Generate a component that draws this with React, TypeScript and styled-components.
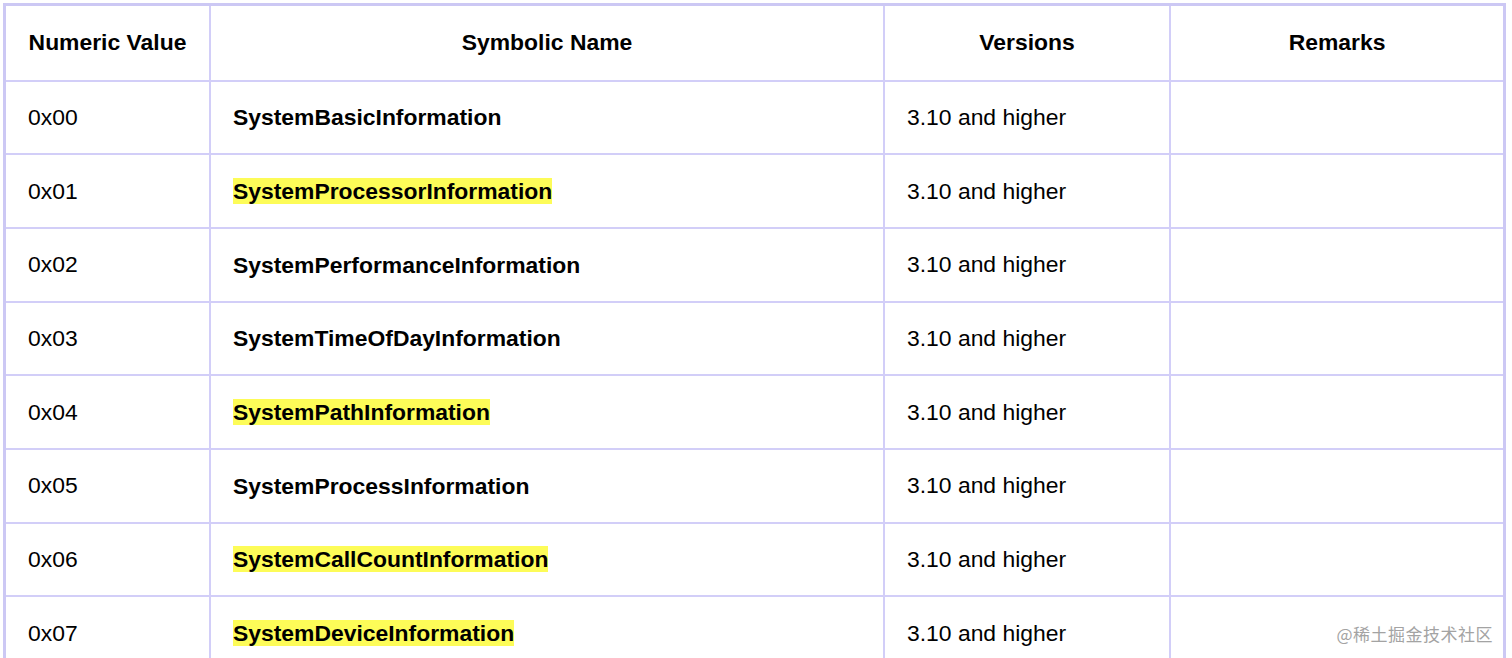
import React from "react";
import styled, { createGlobalStyle } from "styled-components";

const rows = [
  { value: "0x00", name: "SystemBasicInformation", marked: false },
  { value: "0x01", name: "SystemProcessorInformation", marked: true },
  { value: "0x02", name: "SystemPerformanceInformation", marked: false },
  { value: "0x03", name: "SystemTimeOfDayInformation", marked: false },
  { value: "0x04", name: "SystemPathInformation", marked: true },
  { value: "0x05", name: "SystemProcessInformation", marked: false },
  { value: "0x06", name: "SystemCallCountInformation", marked: true },
  { value: "0x07", name: "SystemDeviceInformation", marked: true },
];

const GlobalStyle = createGlobalStyle`
  html, body {
    margin: 0;
    height: 100%;
    overflow: hidden;
    background: #fff;
  }
  body {
    font-family: "Liberation Sans", Arial, sans-serif;
    color: #000;
  }
`;

const Page = styled.div`
  position: relative;
  padding: 3px;
`;

const Table = styled.div`
  width: 1503px;
  box-sizing: border-box;
  border: 3px solid #ccc8f4;
  display: grid;
  grid-template-columns: 203px 674px 286px 334px;
  grid-template-rows: 75.5px;
  grid-auto-rows: 73.7px;
`;

const Cell = styled.div<{ $head?: boolean; $first?: boolean }>`
  box-sizing: border-box;
  display: flex;
  align-items: center;
  justify-content: ${(p) => (p.$head ? "center" : "flex-start")};
  padding: 0 22px;
  border-bottom: 2px solid #d2cef8;
  border-left: ${(p) => (p.$first ? "none" : "2px solid #d2cef8")};
  font-size: 22.9px;
  font-weight: ${(p) => (p.$head ? 700 : 400)};
  white-space: nowrap;
`;

const Name = styled.span<{ $marked: boolean }>`
  font-weight: 700;
  line-height: 26px;
  background: ${(p) => (p.$marked ? "#fdfc58" : "transparent")};
`;

const Watermark = styled.div`
  position: absolute;
  right: 19px;
  top: 621px;
  font-family: "Noto Sans CJK SC", sans-serif;
  font-size: 17px;
  color: #a3a3a3;
  letter-spacing: 0.5px;
`;

const App = () => {
  return (
    <Page>
      <GlobalStyle />
      <Table>
        <Cell $head $first>Numeric Value</Cell>
        <Cell $head>Symbolic Name</Cell>
        <Cell $head>Versions</Cell>
        <Cell $head>Remarks</Cell>
        {rows.map((row) => (
          <React.Fragment key={row.value}>
            <Cell $first>{row.value}</Cell>
            <Cell>
              <Name $marked={row.marked}>{row.name}</Name>
            </Cell>
            <Cell>3.10 and higher</Cell>
            <Cell />
          </React.Fragment>
        ))}
      </Table>
      <Watermark>@稀土掘金技术社区</Watermark>
    </Page>
  );
};

export default App;
